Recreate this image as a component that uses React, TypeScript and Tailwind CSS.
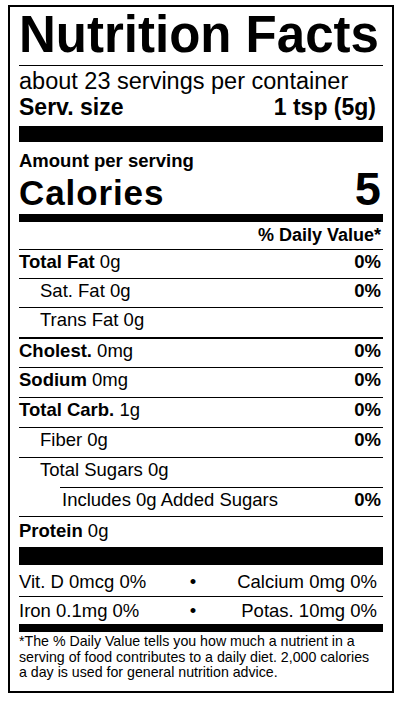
const rows = [
  { bold: "Total Fat", rest: " 0g", dv: "0%", indent: "", h: "h-[29px]", line: "border-t" },
  { bold: "", rest: "Sat. Fat 0g", dv: "0%", indent: "pl-[21px]", h: "h-[29px]", line: "border-t" },
  { bold: "", rest: "Trans Fat 0g", dv: "", indent: "pl-[21px]", h: "h-[30px]", line: "border-t" },
  { bold: "Cholest.", rest: " 0mg", dv: "0%", indent: "", h: "h-[30px]", line: "border-t-2" },
  { bold: "Sodium", rest: " 0mg", dv: "0%", indent: "", h: "h-[30px]", line: "border-t" },
  { bold: "Total Carb.", rest: " 1g", dv: "0%", indent: "", h: "h-[30px]", line: "border-t" },
  { bold: "", rest: "Fiber 0g", dv: "0%", indent: "pl-[21px]", h: "h-[30px]", line: "border-t" },
  { bold: "", rest: "Total Sugars 0g", dv: "", indent: "pl-[21px]", h: "h-[30px]", line: "border-t" },
];

function Row({ bold, rest, dv, indent, h, line }: (typeof rows)[number]) {
  return (
    <div className={`flex justify-between border-black ${line} ${h} ${indent}`}>
      <span className="leading-[24px]">
        {bold && <b className="font-bold">{bold}</b>}
        {rest}
      </span>
      {dv && <b className="pr-[2px] font-bold leading-[24px]">{dv}</b>}
    </div>
  );
}

export default function App() {
  return (
    <div className="min-h-[703px] bg-white pt-[5px] font-['Liberation_Sans',Arial,sans-serif] text-black">
      <div className="ml-[8px] h-[688px] w-[386px] border-2 border-black px-[9px]">
        <h1 className="text-[51px] font-bold leading-[55px]">Nutrition Facts</h1>
        <div className="mt-[3px] h-px bg-black" />
        <p className="text-[23.5px] leading-[30px]">about 23 servings per container</p>
        <div className="flex justify-between text-[23px] font-bold leading-[22px]">
          <span>Serv. size</span>
          <span className="pr-[7px]">1 tsp (5g)</span>
        </div>
        <div className="mt-[8px] h-[16px] bg-black" />

        <p className="pt-[8px] text-[18.5px] font-bold leading-[22px]">Amount per serving</p>
        <div className="flex h-[42px] items-baseline justify-between font-bold">
          <span className="text-[35px] leading-[34px] tracking-[0.9px]">Calories</span>
          <span className="pr-[2px] text-[47px] leading-[34px]">5</span>
        </div>
        <div className="h-[8px] bg-black" />

        <p className="pr-[2px] text-right text-[18px] font-bold leading-[27px]">% Daily Value*</p>

        <div className="text-[18.5px]">
          {rows.map((r) => (
            <Row key={r.rest + r.bold} {...r} />
          ))}
          <div className="ml-[41px] flex h-[29px] justify-between border-t border-black pl-[2px]">
            <span className="leading-[24px]">Includes 0g Added Sugars</span>
            <b className="pr-[2px] font-bold leading-[24px]">0%</b>
          </div>
          <div className="h-[31px] border-t border-black">
            <span className="leading-[24px]">
              <b className="font-bold">Protein</b> 0g
            </span>
          </div>
        </div>
        <div className="h-[18px] bg-black" />

        <div className="text-[18.5px]">
          <div className="grid grid-cols-[162px_24px_1fr] border-b border-black pt-[5px] pb-[2px] leading-[24px]">
            <span>Vit. D 0mcg 0%</span>
            <span className="text-center">•</span>
            <span className="pr-[6px] text-right">Calcium 0mg 0%</span>
          </div>
          <div className="grid grid-cols-[162px_24px_1fr] pt-[2px] pb-[1px] leading-[24px]">
            <span>Iron 0.1mg 0%</span>
            <span className="text-center">•</span>
            <span className="pr-[6px] text-right">Potas. 10mg 0%</span>
          </div>
        </div>
        <div className="h-[8px] bg-black" />

        <p className="pt-[2px] text-[14.2px] leading-[15.5px]">
          *The % Daily Value tells you how much a nutrient in a
          <br />
          serving of food contributes to a daily diet. 2,000 calories
          <br />
          a day is used for general nutrition advice.
        </p>
      </div>
    </div>
  );
}
